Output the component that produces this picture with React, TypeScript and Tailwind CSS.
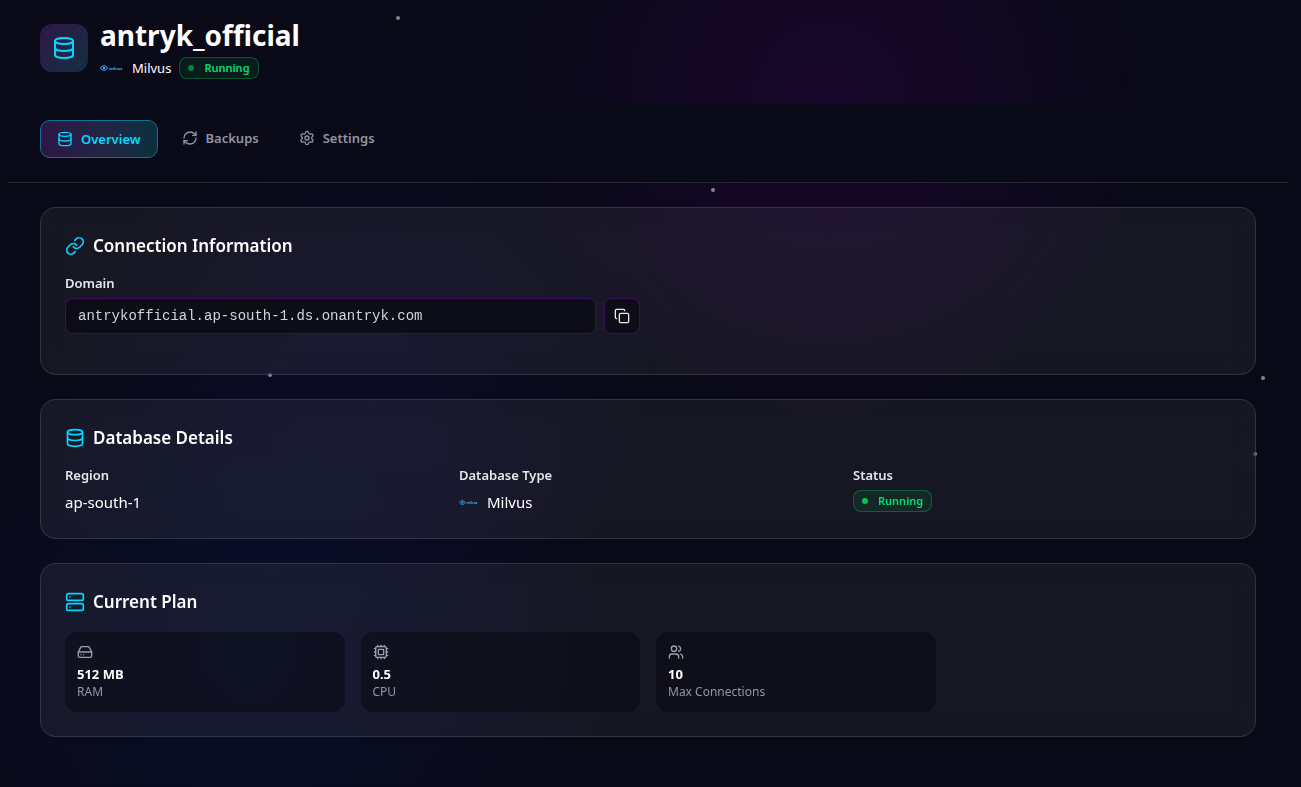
import { useState } from 'react';
import type { ReactNode } from 'react';
import { Copy, Cpu, Database, HardDrive, Link, RefreshCw, Server, Settings, Users } from 'lucide-react';

type TabId = 'overview' | 'backups' | 'settings';

const tabs: { id: TabId; label: string; icon: ReactNode }[] = [
  { id: 'overview', label: 'Overview', icon: <Database size={16} /> },
  { id: 'backups', label: 'Backups', icon: <RefreshCw size={16} /> },
  { id: 'settings', label: 'Settings', icon: <Settings size={16} /> },
];

const plan = [
  { label: 'RAM', value: '512 MB', icon: <HardDrive size={16} /> },
  { label: 'CPU', value: '0.5', icon: <Cpu size={16} /> },
  { label: 'Max Connections', value: '10', icon: <Users size={16} /> },
];

function MilvusLogo({ className }: { className: string }) {
  return (
    <svg className={className} viewBox="0 0 48 12" fill="none" aria-hidden="true">
      <path d="M1 6c3-6 11-6 14 0c-3 6-11 6-14 0z" stroke="#35b5ee" strokeWidth="2" />
      <circle cx="8" cy="6" r="2.5" fill="#35b5ee" />
      <text x="18" y="9" fontSize="8" fontWeight="700" fill="#35b5ee" fontFamily="Noto Sans, sans-serif">milvus</text>
    </svg>
  );
}

function StatusBadge({ dim = false }: { dim?: boolean }) {
  return (
    <span className="inline-flex h-[22px] items-center gap-2.5 rounded-lg border border-green-500/35 bg-green-500/10 px-2 text-[11px] font-semibold text-[#05df72]">
      <span className={`h-1.5 w-1.5 rounded-full ${dim ? 'bg-green-500/60' : 'bg-[#00c950]'}`} />
      Running
    </span>
  );
}

function Card({ title, icon, children }: { title: string; icon: ReactNode; children: ReactNode }) {
  return (
    <section className="rounded-2xl border border-white/12 bg-white/6 p-6 backdrop-blur-md">
      <h2 className="mb-4 flex items-center gap-2 text-[17px] leading-7 font-semibold text-white">
        <span className="text-[#00d9ff]">{icon}</span>
        {title}
      </h2>
      {children}
    </section>
  );
}

export default function App() {
  const [activeTab, setActiveTab] = useState<TabId>('overview');
  const domain = 'antrykofficial.ap-south-1.ds.onantryk.com';

  return (
    <div className="relative isolate min-h-screen overflow-hidden bg-[#090917] pr-[13px] pl-2 font-['Noto_Sans',sans-serif] text-white">
      {/* Background glow and stars */}
      <div className="absolute inset-0 -z-10 bg-[radial-gradient(circle_at_830px_100px,rgba(28,6,48,0.8)_0px,transparent_320px)]" />
      <div className="absolute inset-0 -z-10 bg-[radial-gradient(circle_at_250px_650px,rgba(8,18,60,0.45)_0px,transparent_360px),radial-gradient(circle_at_370px_370px,rgba(18,14,60,0.35)_0px,transparent_280px)]" />
      <div className="absolute top-4 left-[396px] -z-10 h-1 w-1 rounded-full bg-white/50" />
      <div className="absolute top-[188px] left-[711px] -z-10 h-1 w-1 rounded-full bg-white/50" />
      <div className="absolute top-[373px] left-[268px] -z-10 h-1 w-1 rounded-full bg-white/50" />
      <div className="absolute top-[376px] left-[1261px] -z-10 h-1 w-1 rounded-full bg-white/50" />
      <div className="absolute top-[452px] left-[1253px] -z-10 h-1 w-1 rounded-full bg-white/50" />

      {/* Header */}
      <header className="flex h-[104px] items-start gap-3 px-8 pt-[17px]">
        <div className="mt-[7px] flex h-12 w-12 items-center justify-center rounded-xl bg-linear-to-br from-[#2d1548] to-[#08303f] text-[#00d9ff]">
          <Database size={24} />
        </div>
        <div>
          <h1 className="text-[28px] leading-9 font-bold">antryk_official</h1>
          <div className="mt-1 flex items-center gap-2">
            <MilvusLogo className="h-1.5 w-6" />
            <span className="text-[13px] leading-5">Milvus</span>
            <StatusBadge dim />
          </div>
        </div>
      </header>

      {/* Tabs */}
      <nav className="flex items-start gap-2 border-b border-white/12 bg-[#090917] px-8 pt-4 pb-6">
        {tabs.map((tab) => (
          <button
            key={tab.id}
            onClick={() => setActiveTab(tab.id)}
            className={`flex items-center gap-2 rounded-[10px] px-4 py-2 text-[13px] leading-5 font-semibold ${
              activeTab === tab.id
                ? 'border border-[#0e7490] bg-linear-to-r from-[#2d1548] to-[#08303f] text-[#00d9ff]'
                : 'text-[#8f97a5]'
            }`}
          >
            {tab.icon}
            {tab.label}
          </button>
        ))}
      </nav>

      <main className="flex flex-col gap-6 px-8 py-6">
        <Card title="Connection Information" icon={<Link size={20} />}>
          <div className="mb-4 grid grid-cols-2 gap-4">
            <div>
              <label htmlFor="domain" className="mb-2 block text-[13px] leading-[14px] font-semibold text-gray-200">
                Domain
              </label>
              <div className="flex gap-2">
                <input
                  id="domain"
                  readOnly
                  value={domain}
                  className="h-9 min-w-0 flex-1 rounded-lg border border-[#3b0f5c] bg-[#0d0d17] px-3 font-['Liberation_Mono',monospace] text-sm text-gray-300 outline-none"
                />
                <button
                  aria-label="Copy domain"
                  onClick={() => navigator.clipboard.writeText(domain)}
                  className="flex h-9 w-9 items-center justify-center rounded-lg border border-[#3b0f5c] bg-[#0d0d17] text-gray-200"
                >
                  <Copy size={16} />
                </button>
              </div>
            </div>
          </div>
        </Card>

        <Card title="Database Details" icon={<Database size={20} />}>
          <div className="grid grid-cols-3 gap-4">
            <div>
              <p className="mb-2 text-[13px] leading-[14px] font-semibold text-gray-200">Region</p>
              <p className="text-[15px] leading-6">ap-south-1</p>
            </div>
            <div>
              <p className="mb-2 text-[13px] leading-[14px] font-semibold text-gray-200">Database Type</p>
              <p className="flex items-center gap-2 text-[15px] leading-6">
                <MilvusLogo className="h-[5px] w-5" />
                Milvus
              </p>
            </div>
            <div>
              <p className="mb-2 text-[13px] leading-[14px] font-semibold text-gray-200">Status</p>
              <div className="flex">
                <StatusBadge />
              </div>
            </div>
          </div>
        </Card>

        <Card title="Current Plan" icon={<Server size={20} />}>
          <div className="grid grid-cols-4 gap-4">
            {plan.map((item) => (
              <div key={item.label} className="rounded-xl bg-black/30 p-3">
                <div className="mb-1 text-[#99a1af]">{item.icon}</div>
                <p className="text-[13px] leading-5 font-bold">{item.value}</p>
                <p className="text-xs text-[#8f97a5]">{item.label}</p>
              </div>
            ))}
          </div>
        </Card>
      </main>
    </div>
  );
}
